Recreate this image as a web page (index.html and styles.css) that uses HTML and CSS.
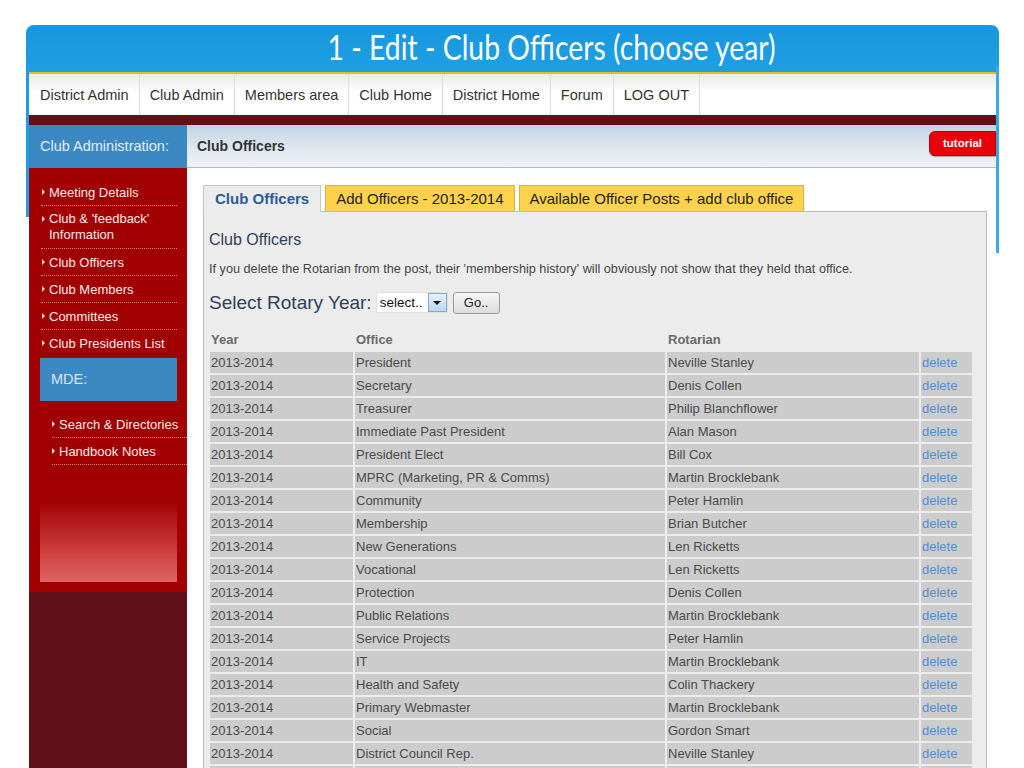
FILE: index.html
```html
<!DOCTYPE html>
<html>
<head>
<meta charset="utf-8">
<title>1 - Edit - Club Officers (choose year)</title>
<link rel="stylesheet" href="styles.css">
</head>
<body>
<div class="frame">
  <div class="slide-title"><span class="slide-title-text">1 - Edit - Club Officers (choose year)</span></div>
  <div class="shot">
    <div class="topnav">
      <a class="nav-item">District Admin</a>
      <a class="nav-item">Club Admin</a>
      <a class="nav-item">Members area</a>
      <a class="nav-item">Club Home</a>
      <a class="nav-item">District Home</a>
      <a class="nav-item">Forum</a>
      <a class="nav-item">LOG OUT</a>
    </div>
    <div class="maroon-bar"></div>
    <div class="main">
      <aside class="sidebar">
        <div class="side-red">
          <div class="side-head">Club Administration:</div>
          <ul class="side-list">
            <li>Meeting Details</li>
            <li class="two">Club &amp; 'feedback'<br>Information</li>
            <li>Club Officers</li>
            <li>Club Members</li>
            <li>Committees</li>
            <li class="last">Club Presidents List</li>
          </ul>
          <div class="mde">MDE:</div>
          <ul class="side-list sub">
            <li>Search &amp; Directories</li>
            <li>Handbook Notes</li>
          </ul>
          <div class="side-grad"></div>
        </div>
      </aside>
      <section class="content">
        <div class="content-head">
          <span class="content-title">Club Officers</span>
          <span class="tutorial">tutorial</span>
        </div>
        <div class="tabs">
          <span class="tab active">Club Officers</span>
          <span class="tab">Add Officers - 2013-2014</span>
          <span class="tab">Available Officer Posts + add club office</span>
        </div>
        <div class="panel">
          <h2 class="panel-title">Club Officers</h2>
          <p class="info">If you delete the Rotarian from the post, their 'membership history' will obviously not show that they held that office.</p>
          <div class="year-row">
            <span class="year-label">Select Rotary Year:</span>
            <span class="fake-select"><span class="sel-text">select..</span><span class="sel-btn"><span class="sel-arrow"></span></span></span>
            <span class="go-btn">Go..</span>
          </div>
          <table class="officers">
            <thead>
              <tr><th class="c-year">Year</th><th class="c-office">Office</th><th class="c-rot">Rotarian</th><th class="c-del"></th></tr>
            </thead>
            <tbody>
              <tr><td>2013-2014</td><td>President</td><td>Neville Stanley</td><td class="del">delete</td></tr>
              <tr><td>2013-2014</td><td>Secretary</td><td>Denis Collen</td><td class="del">delete</td></tr>
              <tr><td>2013-2014</td><td>Treasurer</td><td>Philip Blanchflower</td><td class="del">delete</td></tr>
              <tr><td>2013-2014</td><td>Immediate Past President</td><td>Alan Mason</td><td class="del">delete</td></tr>
              <tr><td>2013-2014</td><td>President Elect</td><td>Bill Cox</td><td class="del">delete</td></tr>
              <tr><td>2013-2014</td><td>MPRC (Marketing, PR &amp; Comms)</td><td>Martin Brocklebank</td><td class="del">delete</td></tr>
              <tr><td>2013-2014</td><td>Community</td><td>Peter Hamlin</td><td class="del">delete</td></tr>
              <tr><td>2013-2014</td><td>Membership</td><td>Brian Butcher</td><td class="del">delete</td></tr>
              <tr><td>2013-2014</td><td>New Generations</td><td>Len Ricketts</td><td class="del">delete</td></tr>
              <tr><td>2013-2014</td><td>Vocational</td><td>Len Ricketts</td><td class="del">delete</td></tr>
              <tr><td>2013-2014</td><td>Protection</td><td>Denis Collen</td><td class="del">delete</td></tr>
              <tr><td>2013-2014</td><td>Public Relations</td><td>Martin Brocklebank</td><td class="del">delete</td></tr>
              <tr><td>2013-2014</td><td>Service Projects</td><td>Peter Hamlin</td><td class="del">delete</td></tr>
              <tr><td>2013-2014</td><td>IT</td><td>Martin Brocklebank</td><td class="del">delete</td></tr>
              <tr><td>2013-2014</td><td>Health and Safety</td><td>Colin Thackery</td><td class="del">delete</td></tr>
              <tr><td>2013-2014</td><td>Primary Webmaster</td><td>Martin Brocklebank</td><td class="del">delete</td></tr>
              <tr><td>2013-2014</td><td>Social</td><td>Gordon Smart</td><td class="del">delete</td></tr>
              <tr><td>2013-2014</td><td>District Council Rep.</td><td>Neville Stanley</td><td class="del">delete</td></tr>
              <tr><td>&nbsp;</td><td>&nbsp;</td><td>&nbsp;</td><td>&nbsp;</td></tr>
            </tbody>
          </table>
        </div>
      </section>
    </div>
  </div>
</div>
</body>
</html>
```

FILE: styles.css
```css
html, body {
  margin: 0;
  padding: 0;
  background: #ffffff;
  height: 768px;
  overflow: hidden;
}
body {
  font-family: "Liberation Sans", Arial, sans-serif;
  color: #333;
}

.frame {
  position: relative;
  margin: 25px 0 0 26px;
  width: 973px;
}
.frame::before,
.frame::after {
  content: "";
  position: absolute;
  top: 40px;
  width: 3px;
  background: #1f9de2;
}
.frame::before { left: 0; height: 152px; }
.frame::after { right: 0; height: 188px; background: #3aa9ea; }

.slide-title {
  height: 47px;
  background: linear-gradient(#1897de, #1f9fe3);
  border-radius: 8px 8px 0 0;
  color: #fff;
  text-align: center;
  font-family: Lato, sans-serif;
  font-weight: 400;
  font-size: 35px;
  line-height: 43px;
  overflow: hidden;
}
.slide-title-text {
  display: inline-block;
  transform: scaleX(0.81);
  transform-origin: center;
  white-space: nowrap;
  margin-left: 78px;
}

.shot {
  margin: 0 3px;
  position: relative;
  z-index: 1;
}

.topnav {
  display: flex;
  height: 41px;
  align-items: stretch;
  border-top: 2px solid #f6b80e;
  background: linear-gradient(#e9e9e9, #ffffff 45%, #ffffff);
  padding-left: 1px;
}
.nav-item {
  display: flex;
  align-items: center;
  padding: 0 10px;
  border-right: 1px solid #dcdcdc;
  font-size: 14.5px;
  color: #333;
}

.maroon-bar {
  height: 10px;
  background: #651019;
}

.main {
  display: flex;
  align-items: stretch;
}

.sidebar {
  width: 158px;
  flex: none;
  background: #5f1018;
  min-height: 700px;
}
.side-red {
  background: #a10000;
  padding-bottom: 10px;
}
.side-head {
  height: 43px;
  background: #3b88c3;
  color: #e3edf7;
  font-size: 14.5px;
  line-height: 43px;
  padding-left: 11px;
}
.side-list {
  list-style: none;
  margin: 11px 10px 0 12px;
  padding: 0;
}
.side-list li {
  position: relative;
  font-size: 13px;
  line-height: 15px;
  color: #fbeaea;
  padding: 6px 0 5px 8px;
  border-bottom: 1px dotted #cf8080;
}
.side-list li.two { line-height: 16px; padding-top: 5px; }
.side-list li::before {
  content: "";
  position: absolute;
  left: 1px;
  top: 10px;
  border-left: 3px solid #f4dede;
  border-top: 3px solid transparent;
  border-bottom: 3px solid transparent;
}
.side-list li.last { border-bottom: none; padding-bottom: 7px; }

.mde {
  margin: 0 10px 0 11px;
  height: 43px;
  background: #3b88c3;
  color: #d9e6f2;
  font-size: 14.5px;
  line-height: 43px;
  padding-left: 11px;
}
.side-list.sub {
  margin: 10px 0 0 23px;
}
.side-list.sub li { padding-left: 7px; }
.side-list.sub li::before { left: 0; }

.side-grad {
  margin: 38px 10px 0 11px;
  height: 79px;
  background: linear-gradient(#a30406, #c93838 55%, #e06565);
}

.content {
  flex: 1;
  background: #fff;
}
.content-head {
  height: 42px;
  display: flex;
  align-items: center;
  justify-content: space-between;
  background: linear-gradient(#c2d3e4, #dfe7ef 55%, #f0f3f7);
  border-bottom: 1px solid #aebccb;
}
.content-title {
  margin-left: 10px;
  font-weight: bold;
  font-size: 14px;
  color: #333;
}
.tutorial {
  align-self: flex-start;
  margin-top: 6px;
  width: 67px;
  height: 25px;
  box-sizing: border-box;
  background: #e8000b;
  border: 1px solid #b80008;
  border-radius: 6px 0 0 6px;
  color: #fff;
  font-weight: bold;
  font-size: 11.5px;
  line-height: 23px;
  text-align: center;
  box-shadow: 0 1px 1px rgba(0,0,0,0.3);
}

.tabs {
  display: flex;
  gap: 4px;
  margin: 17px 0 0 16px;
  position: relative;
  z-index: 2;
}
.tab {
  height: 26px;
  box-sizing: border-box;
  padding: 0 10px;
  background: #fed24c;
  border: 1px solid #d6b24a;
  border-bottom: none;
  font-size: 15px;
  line-height: 26px;
  color: #222;
}
.tab.active {
  background: #ececec;
  border-color: #c4c4c4;
  color: #2a5c98;
  font-weight: bold;
  padding: 0 11px;
  height: 27px;
  margin-bottom: -1px;
}

.panel {
  margin: 0 9px 0 16px;
  background: #ececec;
  border: 1px solid #bdbdbd;
  padding: 18px 0 0 5px;
  min-height: 600px;
}
.panel-title {
  margin: 0;
  font-weight: normal;
  font-size: 16px;
  line-height: 20px;
  color: #2f415a;
}
.info {
  margin: 11px 0 0;
  font-size: 12.7px;
  line-height: 16px;
  color: #444;
  white-space: nowrap;
}
.year-row {
  display: flex;
  align-items: center;
  margin-top: 14px;
  height: 23px;
}
.year-label {
  font-size: 19px;
  color: #2f415a;
  margin-right: 4px;
}
.fake-select {
  display: flex;
  align-items: stretch;
  width: 72px;
  height: 21px;
  background: #fff;
  border: 1px solid #e0e0e0;
  box-sizing: border-box;
}
.sel-text {
  flex: 1;
  font-size: 13.5px;
  line-height: 19px;
  padding-left: 3px;
  color: #111;
}
.sel-btn {
  width: 19px;
  display: flex;
  align-items: center;
  justify-content: center;
  background: linear-gradient(#e6f1fb, #b9d6ef);
  border: 1px solid #86a9c8;
  box-sizing: border-box;
}
.sel-arrow {
  border-top: 4px solid #111;
  border-left: 4px solid transparent;
  border-right: 4px solid transparent;
}
.go-btn {
  margin-left: 5px;
  width: 47px;
  height: 22px;
  box-sizing: border-box;
  border: 1px solid #9a9a9a;
  border-radius: 3px;
  background: linear-gradient(#f6f6f6, #dcdcdc);
  font-size: 13px;
  line-height: 20px;
  text-align: center;
  color: #222;
}

.officers {
  margin: 13px 0 0 -1px;
  border-collapse: separate;
  border-spacing: 2px;
  width: 766px;
  table-layout: fixed;
  font-size: 13px;
}
.officers th, .officers td {
  height: 21px;
  padding: 0 0 0 1px;
  text-align: left;
  white-space: nowrap;
  overflow: hidden;
}
.officers th {
  font-weight: bold;
  color: #6a6a6a;
}
.officers td {
  background: #cccccc;
  color: #4a4a4a;
}
.c-year { width: 142px; }
.c-office { width: 309px; }
.c-rot { width: 251px; }
.c-del { width: 50px; }
.officers td.del { color: #4f8fd6; }
```
